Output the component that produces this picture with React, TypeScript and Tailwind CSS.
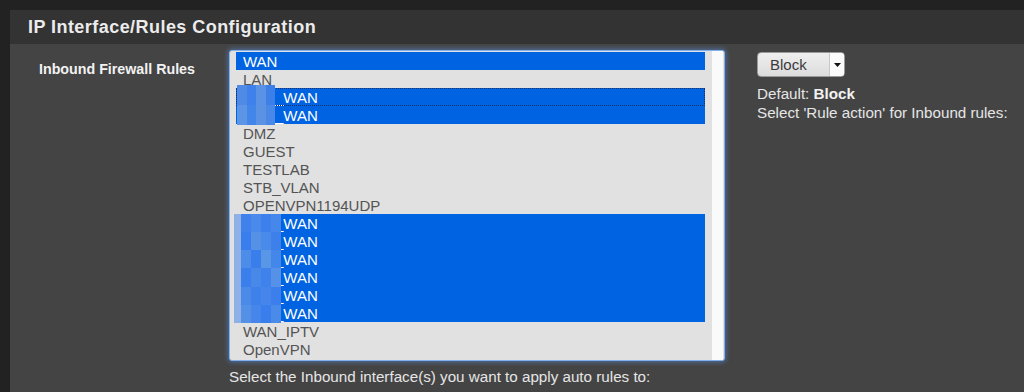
const rows: { label: string; selected?: boolean; masked?: boolean; focus?: boolean }[] = [
  { label: "WAN", selected: true },
  { label: "LAN" },
  { label: "_WAN", selected: true, masked: true, focus: true },
  { label: "_WAN", selected: true, masked: true },
  { label: "DMZ" },
  { label: "GUEST" },
  { label: "TESTLAB" },
  { label: "STB_VLAN" },
  { label: "OPENVPN1194UDP" },
  { label: "_WAN", selected: true, masked: true },
  { label: "_WAN", selected: true, masked: true },
  { label: "_WAN", selected: true, masked: true },
  { label: "_WAN", selected: true, masked: true },
  { label: "_WAN", selected: true, masked: true },
  { label: "_WAN", selected: true, masked: true },
  { label: "WAN_IPTV" },
  { label: "OpenVPN" },
];

// pixelated blur blocks that hide the real interface names
const mosaicA = ["#4f8be6", "#3f80ea", "#5a93e6", "#3c7fe9", "#5c95e5", "#4386ea", "#5b92e4", "#4a88e8"];
const mosaicB = [
  "#3f82ec", "#4a8aea", "#3d80ec", "#4587eb",
  "#3a7eed", "#5592e6", "#4a8ae9", "#3d80ec",
  "#4d8ce8", "#3a7eec", "#5a96e6", "#4487ea",
  "#3b7fec", "#4888e9", "#3f82ec", "#5591e6",
  "#4b8ae9", "#3e81eb", "#4686ea", "#3c7fec",
  "#5390e6", "#4686ea", "#3a7eed", "#4a8ae9",
];

function Mosaic({ cols, cells, cls }: { cols: number; cells: string[]; cls: string }) {
  return (
    <div className={`pointer-events-none absolute grid ${cls}`} style={{ gridTemplateColumns: `repeat(${cols}, 1fr)` }}>
      {cells.map((c, i) => (
        <div key={i} style={{ backgroundColor: c }} />
      ))}
    </div>
  );
}

export default function App() {
  return (
    <div className="h-[392px] w-[1024px] overflow-hidden bg-[#222222] pl-[10px] pt-[10px] font-['Liberation_Sans',Arial,sans-serif]">
      <div className="h-full w-full bg-[#444444]">
        <div className="flex h-[34px] items-center bg-[#333333] pl-[18px]">
          <h2 className="pt-[1px] text-[18px] font-bold tracking-[0.45px] text-[#ececec]">IP Interface/Rules Configuration</h2>
        </div>
        <div className="flex pt-[6px]">
          <div className="w-[219px] pl-[29px] pt-[9px]">
            <p className="text-[14.25px] font-bold text-[#f2f2f2]">Inbound Firewall Rules</p>
          </div>
          <div>
            <div className="relative flex h-[311px] w-[496px] rounded-[3px] border border-[#7fb0ec] bg-[#e1e1e1] pl-[6px] pt-[1px] shadow-[0_0_5px_1px_rgba(90,150,240,0.55)]">
              <div className="w-[469px]">
                {rows.map((r, i) => (
                  <div
                    key={i}
                    className={`h-[18px] pl-[7px] text-[15px] leading-[19px] ${r.selected ? "bg-[#0063e1] text-white" : "text-[#545454]"} ${r.masked ? "pl-[39px]" : ""} ${r.focus ? "outline outline-1 outline-dotted -outline-offset-1 outline-[#1a2f66]" : ""}`}
                  >
                    {r.label}
                  </div>
                ))}
              </div>
              <div className="ml-[7px] mt-[-1px] w-[11px] bg-[#fafafa]" />
              <Mosaic cols={4} cells={mosaicA} cls="left-[7px] top-[34px] h-[40px] w-[38px]" />
              <div className="pointer-events-none absolute left-[4px] top-[163px] h-[109px] w-[8px] bg-[#8db1e6]" />
              <Mosaic cols={4} cells={mosaicB} cls="left-[11px] top-[163px] h-[109px] w-[40px]" />
            </div>
            <p className="mt-[5px] text-[15.2px] text-[#e6e6e6]">Select the Inbound interface(s) you want to apply auto rules to:</p>
          </div>
          <div className="ml-[32px] pt-[2px]">
            <div className="flex h-[25px] w-[88px] overflow-hidden rounded-[4px] border border-[#9a9a9a] bg-gradient-to-b from-[#efefef] to-[#dcdcdc]">
              <span className="flex-1 pl-[12px] text-[15px] leading-[23px] text-[#3a3a3a]">Block</span>
              <span className="flex w-[15px] items-center justify-center border-l border-[#c8c8c8] bg-[#fbfbfb]">
                <svg width="7" height="4" viewBox="0 0 7 4"><path d="M0 0h7L3.5 4z" fill="#111" /></svg>
              </span>
            </div>
            <p className="mt-[7px] text-[15.2px] leading-[19px] text-[#e6e6e6]">
              Default: <b className="text-[#f2f2f2]">Block</b>
            </p>
            <p className="text-[15.2px] leading-[19px] text-[#e6e6e6]">Select 'Rule action' for Inbound rules:</p>
          </div>
        </div>
      </div>
    </div>
  );
}
